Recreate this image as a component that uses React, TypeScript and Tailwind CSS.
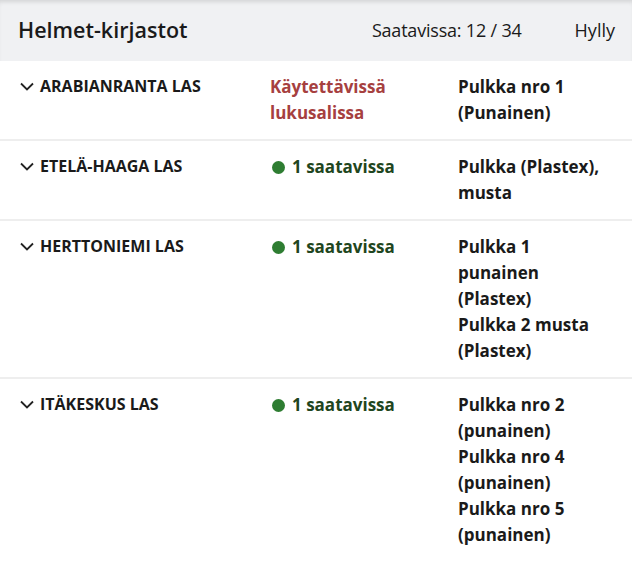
type Row = {
  name: string;
  status: "reading" | "available";
  count?: number;
  items: string[];
};

const rows: Row[] = [
  { name: "Arabianranta las", status: "reading", items: ["Pulkka nro 1 (Punainen)"] },
  { name: "Etelä-Haaga las", status: "available", count: 1, items: ["Pulkka (Plastex), musta"] },
  {
    name: "Herttoniemi las",
    status: "available",
    count: 1,
    items: ["Pulkka 1 punainen (Plastex)", "Pulkka 2 musta (Plastex)"],
  },
  {
    name: "Itäkeskus las",
    status: "available",
    count: 1,
    items: ["Pulkka nro 2 (punainen)", "Pulkka nro 4 (punainen)", "Pulkka nro 5 (punainen)"],
  },
];

function Chevron() {
  return (
    <svg width="14" height="9" viewBox="0 0 14 9" className="mr-[6px] shrink-0" fill="none">
      <polyline points="1,1.5 7,7.5 13,1.5" stroke="#222" strokeWidth="1.8" />
    </svg>
  );
}

export default function App() {
  return (
    <div className="min-h-screen w-[632px] overflow-hidden bg-white font-['Open_Sans',sans-serif] text-[#1a1a1a]">
      <div className="flex h-[61px] items-center bg-[#f0f1f3] pl-[18px] pr-[17px] shadow-[inset_0_4px_4px_-2px_rgba(0,0,0,0.12)]">
        <h2 className="text-[21.5px] font-semibold">Helmet-kirjastot</h2>
        <div className="ml-auto text-[18px] tracking-[-0.2px]">Saatavissa: 12 / 34</div>
        <div className="ml-[53px] text-[18px]">Hylly</div>
      </div>

      {rows.map((row) => (
        <div
          key={row.name}
          className="flex items-start border-b-2 border-[#eeeeee] py-[13px] text-[17px] leading-[26px]"
        >
          <div className="flex w-[270px] shrink-0 items-center pl-[20px]">
            <Chevron />
            <span className="text-[16px] font-bold uppercase leading-[24px]">{row.name}</span>
          </div>

          <div className="w-[188px] shrink-0 font-bold">
            {row.status === "reading" ? (
              <div className="pr-4 text-[#a6403f]">Käytettävissä lukusalissa</div>
            ) : (
              <div className="flex items-center text-[#1f4620]">
                <span className="ml-[2px] mr-[7px] inline-block h-[13px] w-[13px] rounded-full bg-[#2e7d32]" />
                {row.count} saatavissa
              </div>
            )}
          </div>

          <div className="w-[150px] font-bold">
            {row.items.map((item) => (
              <div key={item}>{item}</div>
            ))}
          </div>
        </div>
      ))}
    </div>
  );
}
